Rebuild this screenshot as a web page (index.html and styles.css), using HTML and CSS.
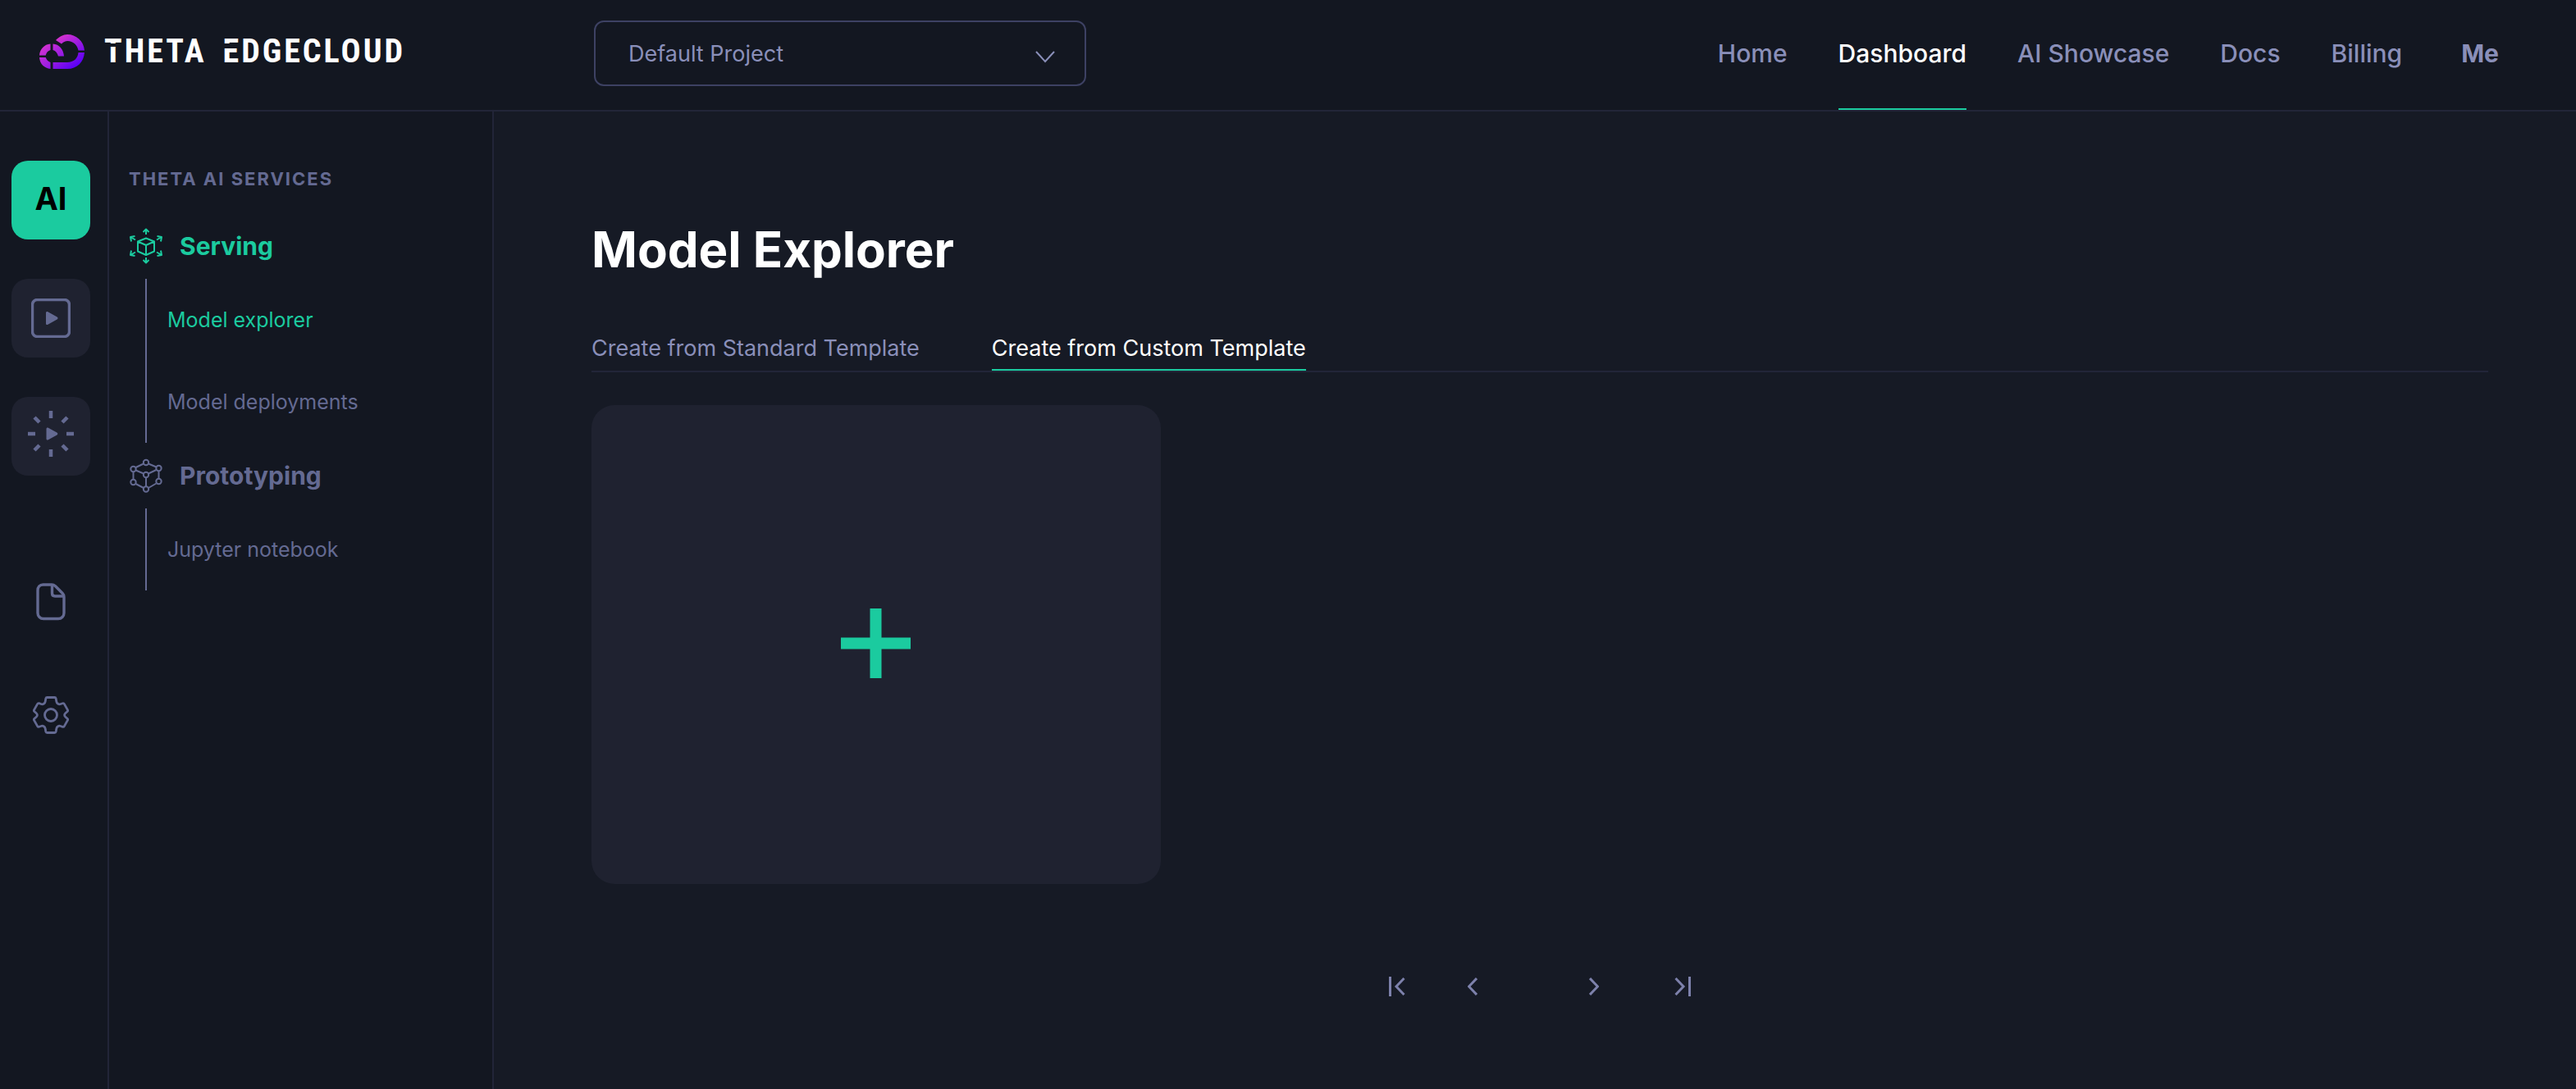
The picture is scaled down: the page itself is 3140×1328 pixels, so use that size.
FILE: index.html
```html
<!DOCTYPE html>
<html lang="en">
<head>
  <meta charset="utf-8">
  <meta name="viewport" content="width=device-width, initial-scale=1">
  <title>Model Explorer - Theta EdgeCloud</title>
  <link rel="stylesheet" href="styles.css">
</head>
<body>
  <header class="topbar">
    <a class="brand" href="#">
      <svg class="brand-mark" width="55" height="42" viewBox="0 0 55 42" aria-hidden="true">
        <defs>
          <linearGradient id="cloud-large" gradientUnits="userSpaceOnUse" x1="22" y1="4" x2="46" y2="38">
            <stop offset="0" stop-color="#d633cf"/>
            <stop offset="1" stop-color="#5a00f5"/>
          </linearGradient>
          <linearGradient id="cloud-small" gradientUnits="userSpaceOnUse" x1="3" y1="14" x2="26" y2="40">
            <stop offset="0" stop-color="#d633cf"/>
            <stop offset="1" stop-color="#7c12ee"/>
          </linearGradient>
        </defs>
        <path fill="url(#cloud-large)" d="M20 7C24 3 29 0 34 0c11 0 20 8 21 19.500h-7.500C46.500 13 41 8 34.500 8c-3 0-5.500 1.200-7.500 3.500zM47.500 22H55c-1 12-9 20-21 20H16.500v-8H34c8 0 13-5 13.500-12z"/>
        <path fill="url(#cloud-small)" d="M13.500 11.500V19c-3 1-5 3-5.800 6.500H0C.5 18 6 12 13.500 11.500zM16.500 11.500C24 12 29.500 18 30 26.500h-7C22 23 20 20 16.500 19zM0 28h7.700c1 3 3 5 5.800 6v8C6 41 .5 36 0 28z"/>
      </svg>
      <span class="wordmark"><span><span class="cap-t">T</span>HETA</span> <span><span class="cap-e">E</span>DGECLOUD</span></span>
    </a>
    <div class="project">
      <select class="project-select" aria-label="Project">
        <option>Default Project</option>
      </select>
      <svg class="project-arrow" width="24" height="15" viewBox="0 0 24 15" fill="none" stroke="currentColor" stroke-width="2" aria-hidden="true"><path d="M1 1l11 12L23 1"/></svg>
    </div>
    <nav class="topnav" aria-label="Main">
      <a href="#">Home</a>
      <a href="#" class="active" aria-current="page">Dashboard</a>
      <a href="#">AI Showcase</a>
      <a href="#">Docs</a>
      <a href="#">Billing</a>
      <a href="#" class="me">Me</a>
    </nav>
  </header>

  <div class="shell">
    <nav class="rail" aria-label="Products">
      <button class="tile tile-active" type="button">AI</button>
      <button class="tile" type="button" aria-label="Video">
        <svg width="48" height="48" viewBox="0 0 48 48" aria-hidden="true">
          <rect x="1.500" y="1.500" width="45" height="45" rx="6" fill="none" stroke="currentColor" stroke-width="3.500"/>
          <path fill="currentColor" d="M18 17.500c0-1.500 1.200-2 2.400-1.300l11.200 6.300c1.300.8 1.300 2.200 0 3l-11.200 6.300c-1.200.7-2.400.2-2.400-1.300z"/>
        </svg>
      </button>
      <button class="tile" type="button" aria-label="Rendering">
        <svg class="burst" width="56" height="56" viewBox="-28 -28 56 56" aria-hidden="true">
          <g stroke="currentColor" stroke-width="4.500">
            <path d="M0-28v9M0 28v-9M-28 0h9M28 0h-9"/>
            <path d="M-20-20l6 6M20-20l-6 6M-20 20l6-6M20 20l-6-6"/>
          </g>
          <path fill="currentColor" d="M-5.500-6c0-1.500 1.200-2 2.400-1.300l10.500 5.800c1.300.8 1.300 2.200 0 3L-3.100 7.300c-1.200.7-2.400.2-2.400-1.300z"/>
        </svg>
      </button>
      <button class="plain plain-first" type="button" aria-label="Documents">
        <svg width="36" height="46" viewBox="0 0 36 46" fill="none" stroke="currentColor" stroke-width="3.400" stroke-linejoin="round" aria-hidden="true">
          <path d="M8.500 2H19c2 0 3 .5 4.500 1.800l8.700 8.700c1.300 1.300 1.800 2.500 1.800 4.500v19.500c0 4-3 7-7 7H9c-4 0-7-3-7-7V9c0-4 2.500-7 6.500-7z"/>
          <path d="M19.500 2v10.500c0 2.500 1 3.500 3.500 3.500h10.500"/>
        </svg>
      </button>
      <button class="plain" type="button" aria-label="Settings">
        <svg width="44" height="46" viewBox="0 0 44 46" fill="none" stroke="currentColor" stroke-width="2.800" stroke-linejoin="round" aria-hidden="true">
          <path d="M17.500 1.500h9c1 0 1.500.5 1.700 1.400l.6 3.600c.4 2.500 2.800 3.900 5.200 3l2.300-.8c.9-.3 1.600-.1 2 .7l4.100 7.200c.5.900.3 1.600-.4 2.200l-2 1.700c-1.900 1.600-1.900 3.400 0 5l2 1.700c.7.600.9 1.300.4 2.200l-4.100 7.200c-.4.800-1.100 1-2 .7l-2.300-.8c-2.400-.9-4.800.5-5.200 3l-.6 3.600c-.2.900-.7 1.400-1.700 1.400h-9c-1 0-1.500-.5-1.700-1.400l-.6-3.600c-.4-2.500-2.800-3.900-5.200-3l-2.300.8c-.9.300-1.600.1-2-.7l-4.100-7.200c-.5-.9-.3-1.600.4-2.200l2-1.700c1.900-1.600 1.900-3.400 0-5l-2-1.700c-.7-.6-.9-1.300-.4-2.200l4.100-7.200c.4-.8 1.100-1 2-.7l2.300.8c2.400.9 4.800-.5 5.200-3l.6-3.600c.2-.9.700-1.400 1.700-1.400z"/>
          <circle cx="22" cy="23" r="7.500"/>
        </svg>
      </button>
    </nav>

    <aside class="sidebar">
      <h2 class="sidebar-title">THETA AI SERVICES</h2>
      <a class="group group-active" href="#">
        <svg width="42" height="44" viewBox="0 0 42 44" fill="none" stroke="currentColor" stroke-width="2" stroke-linejoin="round" aria-hidden="true">
          <path d="M21 12.500l10 4v12L21 33l-10-4.500v-12zM11 16.500l10 4.500 10-4.500M21 21v12"/>
          <path d="M21 8V1.500M17.500 5L21 1.500 24.500 5M21 36v6.500M17.500 39l3.500 3.500 3.500-3.500M8 14.500L2 11M3 16.500L2 11l5.500-1M34 14.500l6-3.500M39 16.500l1-5.500-5.500-1M8 29.500L2 33M3 27.500L2 33l5.500 1M34 29.500l6 3.500M39 27.500l1 5.500-5.500 1"/>
        </svg>
        <span>Serving</span>
      </a>
      <ul class="tree">
        <li><a class="current" href="#">Model explorer</a></li>
        <li><a href="#">Model deployments</a></li>
      </ul>
      <a class="group" href="#">
        <svg width="42" height="42" viewBox="0 0 42 42" fill="none" stroke="currentColor" stroke-width="2" aria-hidden="true">
          <path d="M18 6.500L8.500 11M24 6.500l9.500 4M8.500 14.500l9.500 4M33.500 14l-9.500 4.500M5.500 16.500v9.500M36.500 16v9M8.500 31l9.500 5M33.500 30.500L24 36M21 23.500v11"/>
          <circle cx="21" cy="5" r="3.200"/><circle cx="5.500" cy="13" r="3.200"/><circle cx="36.500" cy="12" r="3.200"/>
          <circle cx="21" cy="20" r="3.200"/><circle cx="5.500" cy="29" r="3.200"/><circle cx="36.500" cy="28" r="3.200"/><circle cx="21" cy="37.500" r="3.200"/>
        </svg>
        <span>Prototyping</span>
      </a>
      <ul class="tree">
        <li><a href="#">Jupyter notebook</a></li>
      </ul>
    </aside>

    <main class="content">
      <h1>Model Explorer</h1>
      <div class="tabs" role="tablist">
        <button type="button" role="tab" aria-selected="false">Create from Standard Template</button>
        <button type="button" role="tab" aria-selected="true" class="selected">Create from Custom Template</button>
      </div>
      <div class="cards">
        <button class="card" type="button" aria-label="Add template">
          <svg width="85" height="85" viewBox="0 0 85 85" fill="currentColor" aria-hidden="true"><path d="M35.500 0h14v35.500H85v14H49.500V85h-14V49.500H0v-14h35.500z"/></svg>
        </button>
      </div>
      <div class="pager">
        <button type="button" aria-label="First page"><svg width="20" height="24" viewBox="0 0 20 24" aria-hidden="true"><path d="M1.500 0v24M18.500 2L9 12l9.500 10"/></svg></button>
        <button type="button" aria-label="Previous page"><svg width="12" height="24" viewBox="0 0 12 24" aria-hidden="true"><path d="M11 2L1.500 12 11 22"/></svg></button>
        <button class="next" type="button" aria-label="Next page"><svg width="12" height="24" viewBox="0 0 12 24" aria-hidden="true"><path d="M1 2l9.500 10L1 22"/></svg></button>
        <button class="last" type="button" aria-label="Last page"><svg width="20" height="24" viewBox="0 0 20 24" aria-hidden="true"><path d="M18.500 0v24M1.500 2L11 12 1.500 22"/></svg></button>
      </div>
    </main>
  </div>
</body>
</html>
```
FILE: styles.css
```css
:root {
  --bg-dark: #131721;
  --bg: #161a25;
  --panel: #1f2230;
  --line: #222538;
  --muted: #646a92;
  --text: #8a8fb9;
  --accent: #1bcb9f;
}

* { box-sizing: border-box; }

body {
  margin: 0;
  min-height: 100vh;
  display: flex;
  flex-direction: column;
  background: var(--bg);
  color: var(--text);
  font-family: Inter, "Liberation Sans", sans-serif;
}

a { color: inherit; text-decoration: none; }

button {
  padding: 0;
  border: 0;
  background: none;
  color: inherit;
  font: inherit;
  cursor: pointer;
}

svg { display: block; flex: none; }

/* Top bar */
.topbar {
  display: flex;
  align-items: stretch;
  height: 136px;
  padding: 0 94px 0 48px;
  background: var(--bg-dark);
  border-bottom: 2px solid var(--line);
}

.brand {
  display: flex;
  align-items: center;
  gap: 24px;
  width: 676px;
  height: 126px;
  color: #fff;
}

.wordmark {
  display: flex;
  gap: 20px;
  font: 700 40px/48px "Roboto Condensed", Roboto, sans-serif;
  letter-spacing: 3px;
}

.cap-t,
.cap-e { position: relative; }

/* The slit that cuts the first letter of each word */
.cap-t::after,
.cap-e::after {
  content: "";
  position: absolute;
  left: 0;
  right: 0;
  top: 14px;
  height: 4px;
  background: var(--bg-dark);
}

.cap-e::after { height: 6px; }

.project {
  position: relative;
  width: 600px;
  height: 80px;
  margin-top: 25px;
}

.project-select {
  width: 100%;
  height: 100%;
  padding: 0 40px;
  border: 2px solid #3d4163;
  border-radius: 12px;
  appearance: none;
  background: transparent;
  color: var(--text);
  font: inherit;
  font-size: 27px;
}

.project-arrow {
  position: absolute;
  right: 38px;
  top: 37px;
  pointer-events: none;
}

.topnav {
  display: flex;
  gap: 62px;
  margin-left: auto;
  font-size: 30px;
  font-weight: 500;
}

.topnav a {
  padding-bottom: 1px;
  border-bottom: 2px solid transparent;
  line-height: 131px;
}

.topnav .active {
  border-color: var(--accent);
  color: #fff;
}

.topnav .me {
  margin-left: 10px;
  font-weight: 700;
}

/* Columns below the top bar */
.shell {
  flex: 1;
  display: flex;
}

.rail {
  display: flex;
  flex-direction: column;
  align-items: center;
  gap: 48px;
  width: 133px;
  padding: 60px 7px 0 0;
  background: var(--bg-dark);
  border-right: 2px solid var(--line);
  color: var(--muted);
}

.tile {
  display: grid;
  place-items: center;
  width: 96px;
  height: 96px;
  border-radius: 20px;
  background: var(--panel);
}

.tile-active {
  padding-bottom: 4px;
  background: var(--accent);
  color: #000;
  font-size: 38px;
  font-weight: 700;
}

.burst { margin-bottom: 6px; }

.plain {
  display: grid;
  place-items: center;
  height: 90px;
}

.plain-first { margin-top: 61px; }

/* Service tree */
.sidebar {
  width: 469px;
  padding: 60px 24px 0;
  background: var(--bg-dark);
  border-right: 2px solid var(--line);
  color: var(--muted);
}

.sidebar-title {
  margin: 0;
  font-size: 22px;
  font-weight: 700;
  line-height: 44px;
  letter-spacing: 2px;
}

.group {
  display: flex;
  align-items: center;
  gap: 20px;
  height: 80px;
  font-size: 30px;
  font-weight: 700;
}

.sidebar-title + .group { margin-top: 20px; }

.group-active,
.tree .current { color: var(--accent); }

.tree {
  margin: 0 0 0 20px;
  padding: 0 0 0 25px;
  border-left: 2px solid var(--muted);
  list-style: none;
  font-size: 25px;
  line-height: 100px;
}

/* Page body */
.content {
  flex: 1;
  padding: 130px 107px 64px 119px;
}

h1 {
  margin: 0;
  color: #fff;
  font-size: 60px;
  font-weight: 700;
  line-height: 76px;
}

.tabs {
  display: flex;
  gap: 88px;
  margin-top: 60px;
  border-bottom: 2px solid var(--line);
}

.tabs button {
  padding-bottom: 2px;
  border-bottom: 2px solid transparent;
  font-size: 27px;
  line-height: 46px;
}

.tabs .selected {
  border-color: var(--accent);
  color: #fff;
}

.cards {
  display: grid;
  grid-template-columns: repeat(3, 30%);
  justify-content: space-between;
  margin-top: 40px;
}

.card {
  display: grid;
  place-items: center;
  height: 584px;
  padding-bottom: 4px;
  border-radius: 28px;
  background: var(--panel);
  color: var(--accent);
}

.pager {
  display: flex;
  justify-content: center;
  gap: 76px;
  margin-top: 113px;
}

.pager .next { margin-left: 60px; }

.pager .last { margin-left: 16px; }

.pager svg {
  fill: none;
  stroke: #7d81ab;
  stroke-width: 3;
}
```
